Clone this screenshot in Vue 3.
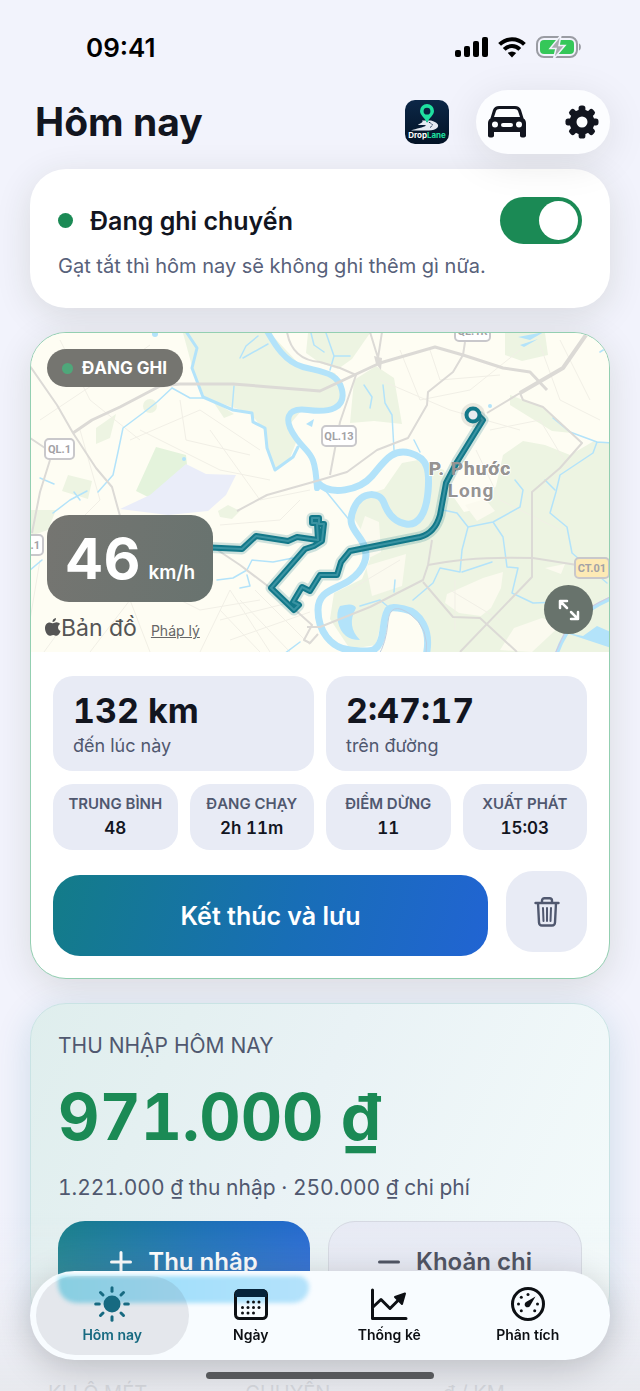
<template>
  <div class="screen">
    <div class="scroll">
      <div class="statusBar">
        <time>09:41</time>
        <div class="statusIcons">
          <svg width="33" height="22" viewBox="0 0 33 22">
            <rect x="0" y="14" width="6" height="7" rx="2" />
            <rect x="9" y="10" width="6" height="11" rx="2" />
            <rect x="18" y="5" width="6" height="16" rx="2" />
            <rect x="27" y="1" width="6" height="20" rx="2" />
          </svg>
          <svg width="28" height="21" viewBox="0 0 28 21" fill="none" stroke="#000" stroke-width="4">
            <path d="M1.6 7.4a17.6 17.6 0 0 1 24.8 0" />
            <path d="M6.2 12.3a11 11 0 0 1 15.6 0" />
            <path d="M14 20.4l-4.2-4.3a6 6 0 0 1 8.4 0z" fill="#000" stroke="none" />
          </svg>
          <svg width="46" height="22" viewBox="0 0 46 22">
            <rect x="1" y="1" width="40" height="20" rx="7" fill="none" stroke="#9a9ca3" stroke-width="2" />
            <rect x="4" y="4" width="34" height="14" rx="4" fill="#35c759" />
            <path d="M43 7.500c2.500.6 2.500 6.400 0 7z" fill="#9a9ca3" />
            <path d="M25 -1L14 12.500h6L17.500 23 29 9.500h-6z" fill="#a9abb0" stroke="#f2f3fc" stroke-width="1.500" />
          </svg>
        </div>
      </div>

      <header>
        <h1>Hôm nay</h1>
        <svg class="logo" width="44" height="44" viewBox="0 0 44 44" role="img" aria-label="DropLane">
          <defs>
            <linearGradient id="night" x1="0" y1="0" x2="0" y2="1">
              <stop offset="0" stop-color="#0c2747" />
              <stop offset="1" stop-color="#031326" />
            </linearGradient>
          </defs>
          <rect width="44" height="44" rx="10" fill="url(#night)" />
          <path d="M17 20.500l9 0c6 1.500 8.500 4.500 6.500 7-1.500 2-5 3-9 3H6c5-2 13-3 15-5-2-1-7 0-8-.8 2-1.600 6-2.200 4-4.200z" fill="#e6eaf2" />
          <path d="M21 21c5 2 9 3.500 4 6.500" fill="none" stroke="#17304f" stroke-width="1" stroke-dasharray="2 1" />
          <path fill-rule="evenodd" d="M22 4a7 7 0 0 1 7 7c0 4.500-5 6.500-7 12-2-5.500-7-7.500-7-12a7 7 0 0 1 7-7zm0 3.800a3.400 3.400 0 1 0 0 6.800 3.400 3.400 0 0 0 0-6.800z" fill="#1fe0a0" />
          <text x="22" y="38" text-anchor="middle" font-size="8" font-weight="700" fill="#fff">Drop<tspan fill="#1fe0a0">Lane</tspan></text>
        </svg>
        <div class="headerActions">
          <button type="button" aria-label="Xe">
            <svg width="38" height="32" viewBox="0 0 38 32">
              <path fill-rule="evenodd" fill="#12151f" d="M11 0h16c3 0 5 1.200 6 4l2.600 8.500c1.600 1 2.400 2.600 2.400 4.500v12.500c0 1.200-.8 2-2 2h-2c-1.200 0-2-.8-2-2V26H6v3.500c0 1.200-.8 2-2 2H2c-1.200 0-2-.8-2-2V17c0-1.900.8-3.500 2.400-4.500L5 4c1-2.800 3-4 6-4zm.4 3C9.400 3 8.500 3.700 8 5l-2 6h26l-2-6c-.5-1.300-1.400-2-3.400-2zM7 15.500a3 3 0 1 0 0 6 3 3 0 0 0 0-6zm24 0a3 3 0 1 0 0 6 3 3 0 0 0 0-6zM15 17a2 2 0 0 0 0 4h8a2 2 0 0 0 0-4z" />
            </svg>
          </button>
          <button type="button" aria-label="Cài đặt">
            <svg width="34" height="34" viewBox="-17 -17 34 34" fill="#12151f">
              <rect v-for="a in 8" :key="a" x="-3.400" y="-16.500" width="6.800" height="9" rx="2.600" :transform="`rotate(${a * 45})`" />
              <circle r="9" fill="none" stroke="#12151f" stroke-width="7" />
            </svg>
          </button>
        </div>
      </header>

      <section class="card recording">
        <div class="recordingRow">
          <span class="dot"></span>
          <label for="recordTrips">Đang ghi chuyến</label>
          <input id="recordTrips" v-model="recording" type="checkbox" role="switch">
        </div>
        <p>Gạt tắt thì hôm nay sẽ không ghi thêm gì nữa.</p>
      </section>

      <section class="card trip">
        <div class="map">
          <svg class="mapCanvas" viewBox="30 333 580 319" preserveAspectRatio="xMidYMid slice">
            <rect x="30" y="333" width="580" height="319" fill="#fefdf3" />
            <g fill="#edf4e2">
              <path d="M183 333H270L300 365 335 373 345 392 337 410 302 410 290 424 297 440 290 458 276 470 267 450 264 430 250 413 205 398 193 370z" />
              <path d="M308 333h62l-18 26-14 10-18-6-14-10z" />
              <path d="M354 380l22-14 18 12 8 46-28-3-24 2z" />
              <path d="M505 333h40l3 22-26 6-17-6z" />
              <path d="M503 455l20-14 22 4 25 10 24-14 16 2V652H430l-4-28-12-12-30-3-8 36-26 4-20-30 4-26 28-14 8-20-6-24-12-20 8-18 24-8 18-26 16-3 26 10 6 22 14 20 18-4 14-22z" />
              <path d="M96 428l20-14-6 24-14 6zM212 400l22 14-10 4zM68 475l24 6-4 18-26-8zM30 510h26l-8 20-18 6z" />
              <path d="M510 395l32 12 30 26-20-2-42-26z" />
              <path d="M218 511l10-6 12 6-8 8-12-2z" />
              <circle cx="150" cy="406" r="7" />
            </g>
            <path d="M156 447l30 8 2 20-40 22-12-6z" fill="#e4f3dc" />
            <path d="M186 464l20 10 30 1-10 20-18 16-40 4-48-6 30-14z" fill="#eaedf9" />
            <g fill="#fbfaef">
              <path d="M447 594l36-16 20-6-2 16-10 20-10 8-22-3-14-10z" />
              <path d="M365 516l14 6 2 30-16 8-8-20z" />
              <path d="M366 566l40-12-4 32-30 10zM465 505l20-6 10 12-18 10z" />
              <path d="M500 650l14-22 28-10 20 6-30 28zM545 568l20-4-4 10z" />
            </g>
            <!-- side streets -->
            <g fill="none" stroke="#f1efe6" stroke-width="1">
              <path v-for="d in streets" :key="d" :d="d" />
            </g>
            <g fill="none" stroke="#b3e3fa" stroke-linecap="round" stroke-linejoin="round">
              <path stroke-width="6" d="M267 331C275 345 285 362 303 367S338 372 342 390 330 413 308 410 283 420 296 438 315 450 317 488" />
              <path stroke-width="7" d="M317 482C330 497 360 490 372 476S392 448 410 453 430 470 428 492 418 526 406 524 388 514 384 503 362 490 354 508 356 530 363 543 364 570 350 580 318 590 318 610 330 648 350 650 380 655 383 630 388 606 404 609 432 630 426 656" />
              <path stroke-width="3" d="M187 333l10 15-5 20 11 29 30 13 19 3 1 9 12 6 2 20 8 22 18-13 5-10" />
              <path v-for="d in streams" :key="d" stroke-width="1.500" :d="d" />
              <path stroke-width="4" d="M556 656q12-40 56-58" />
            </g>
            <g fill="#b3e3fa">
              <path d="M340 606q14-4 16 2-10 18 4 32-18 0-22-18-2-10 2-16z" />
              <path d="M563 632l48 16V632l-14-6-14 10z" />
              <path d="M518 337l26-5-14 8zM520 345l18-6-14 8zM306 424l8-5-2 8z" />
              <circle cx="490" cy="406" r="2" /><circle cx="184" cy="459" r="2" /><circle cx="155" cy="334" r="3" />
            </g>
            <path d="M554 656q8-18 14-30t44-30" fill="none" stroke="#d6c6dc" stroke-width="1" />
            <path d="M378 656q8-12 10-34t22-8 16 42" fill="none" stroke="#bfcfe2" stroke-width="1" />
            <g fill="none" stroke="#dcdad6" stroke-width="2" stroke-linejoin="round">
              <path v-for="d in roads" :key="d" :d="d" />
              <path stroke-width="3" d="M73 433l19-13 28-13 40-21 20-2h53l87 7 60-28 55-16 28 8 40 13 27 4 17 18" />
              <path stroke-width="4" d="M520 393l43-25 25-36" />
            </g>
            <path d="M374 356l8 2-1 12-5-6z" fill="#dcdad6" />

            <g class="place">
              <text x="470" y="475" text-anchor="middle">P. Phước</text>
              <text x="471" y="497" text-anchor="middle">Long</text>
            </g>
            <g fill="none" stroke-linejoin="round">
              <path v-for="s in routeStrokes" :key="s.width" :d="route" :stroke="s.color" :stroke-width="s.width" />
            </g>
            <g class="place over">
              <text x="470" y="475" text-anchor="middle">P. Phước</text>
            </g>
            <circle cx="473" cy="415" r="12" fill="#555" opacity=".12" />
            <circle cx="473" cy="415" r="6.500" fill="#e9ecf0" stroke="#137889" stroke-width="4" />

            <g v-for="s in shields" :key="s.x" class="shield">
              <rect :x="s.x" :y="s.y" :width="s.w" height="20" rx="4" :fill="s.fill" stroke="#c9c8cb" stroke-width="2" />
              <text :x="s.x + s.w / 2" :y="s.y + 14" text-anchor="middle">{{ s.label }}</text>
            </g>
          </svg>
          <div class="badge"><span class="dot"></span>ĐANG GHI</div>
          <div class="speed"><strong>46</strong><span>km/h</span></div>
          <div class="credit">
            <svg width="16" height="18" viewBox="0 0 16 18" fill="#555">
              <path d="M11 0c.2 2-1.500 4-3.500 4C7.300 2 9 .2 11 0zM8 5.200c1 0 2-.9 3.600-.9 1.400 0 2.700.7 3.500 1.800-3 1.800-2.500 5.800.5 7-.8 2.200-2.300 4.600-4 4.600-1.300 0-1.800-.8-3.400-.8s-2.100.8-3.400.8C2.200 17.700 0 13.500 0 10.200 0 6.500 2.300 4.400 4.600 4.400c1.400 0 2.500.8 3.400.8z" />
            </svg>
            <span>Bản đồ</span>
            <a href="#">Pháp lý</a>
          </div>
          <button type="button" class="expand" aria-label="Mở rộng bản đồ">
            <svg width="22" height="22" viewBox="0 0 22 22" fill="none" stroke="#fff" stroke-width="2.500" stroke-linejoin="round" stroke-linecap="round">
              <path d="M2 9V2h7M2 2l7 7M20 13v7h-7M20 20l-7-7" />
            </svg>
          </button>
        </div>

        <div class="tripBody">
          <div class="totals">
            <div v-for="t in totals" :key="t.label" class="tile">
              <strong>{{ t.value }}</strong>
              <span>{{ t.label }}</span>
            </div>
          </div>
          <div class="details">
            <div v-for="d in details" :key="d.label" class="tile">
              <span>{{ d.label }}</span>
              <strong>{{ d.value }}</strong>
            </div>
          </div>
          <div class="tripActions">
            <button type="button" class="primary">Kết thúc và lưu</button>
            <button type="button" class="delete" aria-label="Xóa chuyến">
              <svg width="26" height="30" viewBox="0 0 26 30" fill="none" stroke="#50586f" stroke-width="2.400" stroke-linecap="round" stroke-linejoin="round">
                <path d="M1.500 6h23M8 6V3.500C8 2 9 1.200 10.500 1.200h5C17 1.200 18 2 18 3.500V6M4 6l1 19.500c.1 2 1 3 3 3h10c2 0 2.900-1 3-3L22 6" />
                <path d="M9 11l.5 13M13 11v13M17 11l-.5 13" stroke-width="2" />
              </svg>
            </button>
          </div>
        </div>
      </section>

      <section class="card income">
        <h2>THU NHẬP HÔM NAY</h2>
        <strong class="amount">971.000 ₫</strong>
        <p>1.221.000 ₫ thu nhập · 250.000 ₫ chi phí</p>
        <div class="incomeActions">
          <button type="button" class="primary">
            <svg width="22" height="22" viewBox="0 0 22 22"><path d="M11 1.500v19M1.500 11h19" /></svg>
            Thu nhập
          </button>
          <button type="button" class="secondary">
            <svg width="22" height="22" viewBox="0 0 22 22"><path d="M1.500 11h19" /></svg>
            Khoản chi
          </button>
        </div>
      </section>

      <section class="summary">
        <div v-for="label in summary" :key="label">{{ label }}</div>
      </section>
    </div>

    <div class="bottomFade"></div>
    <nav>
      <div class="glow"></div>
      <button v-for="tab in tabs" :key="tab" type="button" :class="{ active: tab == current }" @click="current = tab">
        <svg v-if="tab == 'Hôm nay'" width="36" height="36" viewBox="-18 -18 36 36">
          <circle r="8.500" fill="currentColor" />
          <path v-for="a in 8" :key="a" d="M0 -16.300v3.600" :transform="`rotate(${a * 45})`" stroke="currentColor" stroke-width="3" stroke-linecap="round" />
        </svg>
        <svg v-else-if="tab == 'Ngày'" width="36" height="36" viewBox="0 0 36 36">
          <rect x="2.500" y="4.500" width="31" height="28" rx="4" fill="none" stroke="currentColor" stroke-width="3" />
          <path d="M2 11V8c0-3 2-5 5-5h22c3 0 5 2 5 5v3z" fill="#06233a" />
          <circle v-for="p in days" :key="p.join()" :cx="p[0]" :cy="p[1]" r="1.500" fill="currentColor" />
        </svg>
        <svg v-else-if="tab == 'Thống kê'" width="40" height="36" viewBox="0 0 40 36" fill="none" stroke="currentColor" stroke-width="3" stroke-linecap="round" stroke-linejoin="round">
          <path d="M3.500 4v28.500H37M4 21l8-7.500 9 9L31 12.500" />
          <path d="M26 11l10-3.500L33 18z" fill="currentColor" stroke-width="2" />
        </svg>
        <svg v-else width="36" height="36" viewBox="0 0 36 36">
          <circle cx="18" cy="18" r="15.500" fill="none" stroke="currentColor" stroke-width="3" />
          <circle v-for="p in ticks" :key="p.join()" :cx="p[0]" :cy="p[1]" r="1.500" fill="currentColor" />
          <path d="M25.500 10.500L20 20a2.900 2.900 0 1 1-4-4z" fill="currentColor" />
        </svg>
        <span>{{ tab }}</span>
      </button>
    </nav>
    <div class="homeIndicator"></div>
  </div>
</template>

<script setup>
import { ref } from 'vue'

const recording = ref(true)
const current = ref('Hôm nay')

const totals = [
  { value: '132 km', label: 'đến lúc này' },
  { value: '2:47:17', label: 'trên đường' }
]

const details = [
  { label: 'TRUNG BÌNH', value: '48' },
  { label: 'ĐANG CHẠY', value: '2h 11m' },
  { label: 'ĐIỂM DỪNG', value: '11' },
  { label: 'XUẤT PHÁT', value: '15:03' }
]

const summary = ['KI LÔ MÉT', 'CHUYẾN', 'đ / KM']
const tabs = ['Hôm nay', 'Ngày', 'Thống kê', 'Phân tích']

const days = [
  [15, 16], [20.5, 16], [26, 16],
  [9.5, 21.5], [15, 21.5], [20.5, 21.5], [26, 21.5],
  [9.5, 27], [15, 27], [20.5, 27]
]
const ticks = [[18, 8.5], [11.3, 11.3], [8.5, 18], [11.3, 24.7], [24.7, 24.7], [27.5, 18]]

const shields = [
  { label: 'QL.1', x: 45, y: 439, w: 29, fill: '#fff' },
  { label: 'QL.1', x: 14, y: 535, w: 29, fill: '#fff' },
  { label: 'QL.13', x: 322, y: 426, w: 34, fill: '#fff' },
  { label: 'QL.1R', x: 455, y: 321, w: 35, fill: '#fff' },
  { label: 'CT.01', x: 575, y: 558, w: 34, fill: '#fdeab5' }
]

const route = 'M200 547L242 549 256 536 288 541 297 537 318 540 317 523 312 523 312 518 319 518 319 524 324 524 322 541 314 546 305 549 271 588 294 610 299 605 293 602 302 587 310 591 320 575 337 575 341 562 350 551 355 550 420 537Q435 533 440 515L446 483 457 462 483 420 478 415'
const routeStrokes = [
  { color: 'rgba(19, 120, 137, 0.2)', width: 11 },
  { color: '#137889', width: 6 },
  { color: '#3a93a2', width: 2 }
]

const roads = [
  'M30 366L57 405 73 433 96 468 112 487 120 516',
  'M487 413L520 393 523 400 543 407 582 443 560 468 532 492 532 577 460 652',
  'M465 342L463 355 453 372 428 392 427 405 408 438 377 450 347 472 320 480 267 495 237 511',
  'M370 332L378 358 382 332',
  'M320 362L340 368 356 375 340 422 330 475',
  'M287 332Q292 360 320 362',
  'M432 540L428 565 423 580 370 607 320 627 307 627',
  'M428 565Q470 556 533 558L577 565',
  'M423 582L453 617 480 618 517 652',
  'M213 547L240 565 273 590 312 625 304 640 310 643 318 634',
  'M30 438L48 450M50 460L40 492 32 533'
]

const streams = [
  'M172 388L157 402 143 413 123 428 118 452 113 475 98 492M87 491L70 500 53 513',
  'M172 388L190 398 203 398',
  'M240 358L246 346 258 336M243 358L268 344M232 410L234 386',
  'M364 385L372 397 370 408M383 385L385 403 392 415 394 450',
  'M553 418L570 432 597 442 611 443M597 442L593 453 560 475 556 492 550 513 567 527 572 553 607 583',
  'M443 510L457 513 468 527 462 550 460 572 440 568 433 583 413 600M462 572L492 562',
  'M468 527L493 522 520 507 523 490 515 480M493 522L503 537 507 567 518 568 512 593 533 603 560 602',
  'M217 580L233 578 247 570 252 560 273 562 293 558M247 575L250 586 240 588',
  'M325 490L355 527M300 642L276 660',
  'M326 333L334 356 330 370M335 356L350 356',
  'M40 478L54 484M74 492L80 500M30 570L42 560',
  'M414 440L420 452M360 606L380 600 392 610M395 580L394 592',
  'M311 333L314 345 324 352M600 352L611 345M545 480L555 490'
]

const streets = [
  'M40 420L100 380 150 345', 'M60 340L90 400 140 440', 'M130 440L200 410 260 450',
  'M180 400L186 440 250 455', 'M140 430L220 470 270 480', 'M210 430L260 500 310 490',
  'M60 600L120 570 200 610 260 600', 'M90 652L130 600 150 652', 'M200 652L230 590 270 652',
  'M220 620L300 600M230 640L310 612', 'M240 600L290 652M220 610L260 652M255 590L310 645',
  'M380 380L450 410 520 430', 'M400 350L420 400 470 390 520 350', 'M430 350L440 380 500 375',
  'M490 430L540 420 570 470', 'M540 345L560 400 600 420', 'M560 340L590 400',
  'M40 560L30 620M60 630L44 652', 'M350 590L400 560', 'M476 450L500 500 560 530',
  'M450 590L500 620', 'M220 525L280 520 300 500', 'M455 580L455 630', 'M80 430L100 500 60 540'
]
</script>

<style>
body {
  background: #f2f3fc;
}
</style>

<style scoped>
.screen {
  position: relative;
  height: 100vh;
  overflow: hidden;
  background: #f2f3fc;
  color: #12151f;
  font-family: Inter, "Liberation Sans", sans-serif;
}
.screen * {
  box-sizing: border-box;
}
.scroll {
  height: 100%;
  padding: 0 30px;
  overflow-y: auto;
  scrollbar-width: none;
}
h1, h2, p {
  margin: 0;
}
button {
  padding: 0;
  border: 0;
  background: none;
  color: inherit;
  font: inherit;
  cursor: pointer;
}
svg {
  flex: none;
}
.statusBar {
  display: flex;
  justify-content: space-between;
  align-items: center;
  height: 90px;
  padding: 4px 28px 0 56px;
  color: #000;
}
time {
  font-size: 26px;
  font-weight: 600;
}
.statusIcons {
  display: flex;
  align-items: center;
  gap: 10px;
}
header {
  display: flex;
  align-items: center;
  margin-bottom: 15px;
  padding-left: 5px;
}
h1 {
  flex: 1;
  font-size: 39px;
  font-weight: 700;
  line-height: 48px;
}
.logo {
  margin-right: 27px;
}
.headerActions {
  display: flex;
  justify-content: space-between;
  align-items: center;
  width: 134px;
  height: 64px;
  padding: 0 11px 0 12px;
  border-radius: 32px;
  background: #fcfdff;
  box-shadow: 0 8px 40px rgba(30, 30, 10, 0.1);
}
.headerActions button, nav button, .delete, .expand {
  display: flex;
  align-items: center;
  justify-content: center;
}
.card {
  margin-bottom: 24px;
  border-radius: 36px;
  background: #fff;
  box-shadow: 0 8px 36px rgba(40, 50, 20, 0.12);
}
.dot {
  width: 15px;
  height: 15px;
  border-radius: 50%;
  background: #1b8a55;
}
.recording {
  padding: 28px;
}
.recordingRow {
  display: flex;
  align-items: center;
  margin-bottom: 8px;
}
.recordingRow label {
  flex: 1;
  padding-left: 17px;
  font-size: 25px;
  font-weight: 600;
}
.recordingRow input {
  appearance: none;
  width: 82px;
  height: 47px;
  margin: 0;
  padding: 4px;
  border-radius: 24px;
  background: #b9bec9;
}
.recordingRow input::before {
  content: "";
  display: block;
  width: 39px;
  height: 39px;
  border-radius: 50%;
  background: #fff;
}
.recordingRow input:checked {
  background: #1b8a55;
}
.recordingRow input:checked::before {
  margin-left: auto;
}
.recording p {
  color: #58617a;
  font-size: 20px;
  line-height: 28px;
}
.trip {
  overflow: hidden;
  border: 1px solid #93cfb1;
}
.map {
  position: relative;
  height: 319px;
}
.mapCanvas {
  display: block;
  width: 100%;
  height: 100%;
}
.shield text {
  fill: #a3a2a6;
  font: 700 11px Roboto, sans-serif;
}
.place text {
  fill: #969493;
  stroke: #fff;
  stroke-width: 2px;
  paint-order: stroke;
  font: 700 19px Roboto, sans-serif;
  letter-spacing: 1px;
}
.place.over text {
  stroke: none;
}
.badge {
  position: absolute;
  top: 16px;
  left: 16px;
  display: flex;
  align-items: center;
  gap: 9px;
  height: 38px;
  padding: 0 16px 0 15px;
  border-radius: 19px;
  background: #757570;
  color: #fff;
  font-size: 17px;
  font-weight: 700;
}
.badge .dot {
  width: 11px;
  height: 11px;
  background: #4fa77a;
}
.speed {
  position: absolute;
  left: 16px;
  bottom: 50px;
  display: flex;
  align-items: baseline;
  justify-content: center;
  gap: 8px;
  width: 166px;
  height: 87px;
  border-radius: 22px;
  background: linear-gradient(100deg, #757571, #68736f);
  color: #fff;
  line-height: 87px;
}
.speed strong {
  font-size: 57px;
  font-weight: 700;
}
.speed span {
  font-size: 19px;
  font-weight: 600;
}
.credit {
  position: absolute;
  left: 14px;
  bottom: 5px;
  display: flex;
  align-items: baseline;
  color: #555;
  font-size: 23px;
  line-height: 32px;
}
.credit a {
  margin-left: 14px;
  color: #666;
  font-size: 14px;
}
.expand {
  position: absolute;
  right: 16px;
  bottom: 18px;
  width: 49px;
  height: 49px;
  border-radius: 50%;
  background: #68736c;
}
.tripBody {
  padding: 24px 22px 22px;
}
.totals, .details {
  display: grid;
  grid-template-columns: repeat(2, 1fr);
  gap: 12px;
  margin-bottom: 13px;
}
.details {
  grid-template-columns: repeat(4, 1fr);
  margin-bottom: 21px;
}
.tile {
  display: flex;
  flex-direction: column;
  border-radius: 20px;
  background: #e8ebf5;
  color: #50586f;
}
.tile strong {
  color: #12151f;
  font-variant-numeric: tabular-nums;
}
.totals .tile {
  gap: 3px;
  padding: 15px 20px 13px;
  font-size: 18px;
  line-height: 24px;
}
.totals strong {
  font-size: 34px;
  font-weight: 700;
  line-height: 40px;
}
.details .tile {
  gap: 2px;
  padding: 10px 4px;
  text-align: center;
  font-size: 15px;
  font-weight: 600;
  line-height: 20px;
  white-space: nowrap;
}
.details strong {
  font-size: 17px;
  font-weight: 600;
  line-height: 24px;
}
.tripActions {
  display: flex;
  align-items: flex-start;
  gap: 18px;
}
.primary, .secondary {
  display: flex;
  flex: 1;
  align-items: center;
  justify-content: center;
  gap: 16px;
  height: 81px;
  border-radius: 27px;
  font-size: 25px;
  font-weight: 600;
}
.primary {
  background: linear-gradient(105deg, #137c88, #186eb6 55%, #2164d3);
  color: #fff;
}
.tripActions .primary {
  margin-top: 4px;
}
.delete {
  width: 81px;
  height: 81px;
  border-radius: 27px;
  background: #e8ebf5;
}
.income {
  display: flex;
  flex-direction: column;
  gap: 19px;
  padding: 28px 27px;
  border: 1px solid #c9e3e4;
  background: linear-gradient(115deg, #dfeeed, #e9f2f5 45%, #f4fbfb);
  box-shadow: 0 8px 36px rgba(20, 100, 130, 0.16);
  color: #50586f;
}
.income h2 {
  font-size: 21px;
  font-weight: 400;
  line-height: 28px;
}
.amount {
  color: #1b8a55;
  font-size: 64px;
  font-weight: 700;
  line-height: 76px;
  font-variant-numeric: tabular-nums;
}
.income p {
  font-size: 21px;
  line-height: 28px;
  font-variant-numeric: tabular-nums;
}
.incomeActions {
  display: flex;
  gap: 18px;
}
.incomeActions path {
  stroke: currentColor;
  stroke-width: 3px;
  stroke-linecap: round;
}
.incomeActions button {
  font-size: 24px;
}
.secondary {
  border: 1px solid #d5d9e2;
  background: #e8ebf5;
  color: #3d4252;
}
.summary {
  display: grid;
  grid-template-columns: repeat(3, 1fr);
  gap: 12px;
  padding: 24px 0 150px;
  color: #a8abb4;
  font-size: 20px;
  line-height: 28px;
}
.summary div {
  padding-left: 18px;
}
.bottomFade {
  position: fixed;
  right: 0;
  bottom: 0;
  left: 0;
  height: 180px;
  background: linear-gradient(rgba(232, 234, 238, 0), rgba(232, 234, 238, 0.15) 35%, rgba(228, 230, 234, 0.75));
  pointer-events: none;
}
nav {
  position: fixed;
  right: 30px;
  bottom: 31px;
  left: 30px;
  display: grid;
  grid-template-columns: repeat(4, 1fr);
  height: 89px;
  padding: 5px 13px;
  border-radius: 45px;
  background: #f8fcff;
  box-shadow: 0 8px 36px rgba(0, 0, 0, 0.2);
}
nav button {
  position: relative;
  flex-direction: column;
  gap: 3px;
  color: #0d1014;
  font-size: 14px;
  font-weight: 600;
  line-height: 20px;
}
nav button.active {
  color: #0d6c85;
}
nav button.active::before {
  content: "";
  position: absolute;
  inset: 0 -7px;
  border-radius: 40px;
  background: rgba(90, 95, 110, 0.13);
}
/* the blue button showing through the glass */
.glow {
  position: absolute;
  top: 5px;
  left: 28px;
  width: 251px;
  height: 27px;
  border-radius: 6px 14px 20px 24px;
  background: linear-gradient(90deg, #8fe0f3, #a5e0fb 50%, #b4e2fb);
  filter: blur(2px);
}
.homeIndicator {
  position: fixed;
  bottom: 12px;
  left: 50%;
  width: 228px;
  height: 7px;
  margin-left: -114px;
  border-radius: 4px;
  background: #56585b;
}
</style>
